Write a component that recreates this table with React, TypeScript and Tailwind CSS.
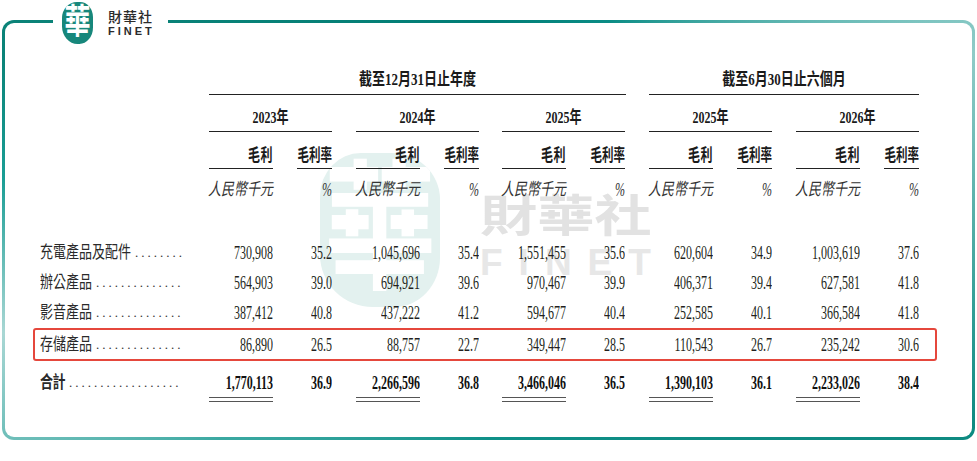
import React from 'react';

const groupGap = ['', 'ml-[24px]', 'ml-[23px]', 'ml-[24px]', 'ml-[24px]'];

const rows = [
  { label: '充電產品及配件', dots: 8, v: ['730,908', '35.2', '1,045,696', '35.4', '1,551,455', '35.6', '620,604', '34.9', '1,003,619', '37.6'] },
  { label: '辦公產品', dots: 14, v: ['564,903', '39.0', '694,921', '39.6', '970,467', '39.9', '406,371', '39.4', '627,581', '41.8'] },
  { label: '影音產品', dots: 14, v: ['387,412', '40.8', '437,222', '41.2', '594,677', '40.4', '252,585', '40.1', '366,584', '41.8'] },
];

const storage = { label: '存儲產品', dots: 14, v: ['86,890', '26.5', '88,757', '22.7', '349,447', '28.5', '110,543', '26.7', '235,242', '30.6'] };

const total = ['1,770,113', '36.9', '2,266,596', '36.8', '3,466,046', '36.5', '1,390,103', '36.1', '2,233,026', '38.4'];

const years = ['2023年', '2024年', '2025年', '2025年', '2026年'];

// the source table is set in a tall, narrow face: small size stretched upwards
const Num = ({ children, bold = false }: { children: React.ReactNode; bold?: boolean }) => (
  <span
    className={`inline-block scale-y-[1.6] whitespace-nowrap text-[12px] leading-[28px] ${
      bold ? 'font-bold text-[#111]' : 'text-[#231f20]'
    }`}
  >
    {children}
  </span>
);

const Label = ({ text, dots, bold = false }: { text: string; dots: number; bold?: boolean }) => (
  <div className="flex w-[169px] shrink-0 items-baseline">
    <span
      className={`inline-block scale-y-[1.3] whitespace-nowrap text-[13px] leading-[28px] text-[#2a2a2a] ${
        bold ? 'font-bold tracking-[-0.5px]' : ''
      }`}
    >
      {text}
    </span>
    <span className="ml-[4px] whitespace-nowrap text-[13px] tracking-[3px] text-[#333]">{'.'.repeat(dots)}</span>
  </div>
);

const DataCells = ({ v }: { v: string[] }) => (
  <>
    {[0, 1, 2, 3, 4].map((g) => (
      <div key={g} className={`flex w-[123px] shrink-0 ${groupGap[g]}`}>
        <div className="flex w-[64px] justify-end">
          <Num>{v[g * 2]}</Num>
        </div>
        <div className="ml-[24px] flex w-[35px] justify-end">
          <Num>{v[g * 2 + 1]}</Num>
        </div>
      </div>
    ))}
  </>
);

const Logo = () => (
  <div className="absolute left-[53px] top-0 flex h-[46px] w-[115px] items-center bg-white">
    <div className="ml-[9px] flex h-[42px] w-[31px] items-center justify-center overflow-hidden rounded-[48%_42%_44%_50%/38%_36%_40%_42%] bg-[#17877b]">
      <span className="inline-block scale-y-[1.35] text-[26px] font-bold leading-none text-white">華</span>
    </div>
    <div className="ml-[15px] mt-[1px] flex flex-col font-['Liberation_Sans','Noto_Sans_CJK_TC',sans-serif] leading-none text-[#2b2b2b]">
      <span className="text-[14px] font-medium tracking-[1px]">財華社</span>
      <span className="mt-[2px] text-[11px] font-bold tracking-[3px]">FINET</span>
    </div>
  </div>
);

const Watermark = () => (
  <>
    <div className="absolute left-[315px] top-[130px] flex h-[154px] w-[120px] items-center justify-center overflow-hidden rounded-[34%_40%_38%_44%/28%_30%_32%_34%] bg-[#e3f1ef]">
      <span className="inline-block scale-y-[1.25] text-[112px] font-bold leading-none text-white">華</span>
    </div>
    <div className="absolute left-[475px] top-[171px] flex flex-col items-start text-[#e2e2e2]">
      <span className="inline-block origin-left scale-x-[1.3] text-[44px] font-bold leading-[48px]">財華社</span>
      <span className="mt-[3px] font-['Liberation_Sans',sans-serif] text-[37px] font-bold leading-[36px] tracking-[16px] text-[#e7e7e7]">
        FINET
      </span>
    </div>
  </>
);

export default function App() {
  return (
    <div className="relative h-[461px] w-[977px] overflow-hidden bg-white font-['Liberation_Serif','Noto_Sans_CJK_TC',serif]">
      <div className="ml-[2px] mt-[20px] h-[420px] w-[973px] rounded-[12px] bg-[conic-gradient(#007d76_0deg,#0a8c85_30deg,#7cc4c0_64deg,#8fcbc7_70deg,#0e8a81_112deg,#0f9088_180deg,#3aa8a1_232deg,#70bfba_247deg,#a9d7d4_258deg,#1a9e95_276deg,#0b8378_290deg,#007d76_360deg)] p-[3px]">
        <div className="relative h-full rounded-[9px] bg-white pl-[35px] pt-[47px]">
          <Watermark />

          <div className="relative">
            {/* period headers */}
            <div className="flex">
              <div className="w-[169px] shrink-0" />
              <div className="flex h-[25px] w-[417px] justify-center border-b border-[#222]">
                <span className="inline-block scale-y-[1.3] whitespace-nowrap text-[13px] font-bold leading-[20px] text-[#1a1a1a]">
                  截至12月31日止年度
                </span>
              </div>
              <div className="ml-[23px] flex h-[25px] w-[270px] justify-center border-b border-[#222]">
                <span className="inline-block scale-y-[1.3] whitespace-nowrap text-[13px] font-bold leading-[20px] text-[#1a1a1a]">
                  截至6月30日止六個月
                </span>
              </div>
            </div>

            {/* years */}
            <div className="flex">
              <div className="w-[169px] shrink-0" />
              {years.map((y, g) => (
                <div key={g} className={`flex h-[37px] w-[123px] shrink-0 items-end justify-center border-b border-[#222] pb-[4px] ${groupGap[g]}`}>
                  <span className="inline-block scale-y-[1.4] whitespace-nowrap text-[12px] font-bold leading-[20px] text-[#1a1a1a]">
                    {y}
                  </span>
                </div>
              ))}
            </div>

            {/* column titles */}
            <div className="flex">
              <div className="w-[169px] shrink-0" />
              {years.map((_, g) => (
                <div key={g} className={`flex w-[123px] shrink-0 ${groupGap[g]}`}>
                  <div className="flex h-[37px] w-[64px] items-end justify-end border-b border-[#222] pb-[3px]">
                    <span className="inline-block scale-y-[1.4] whitespace-nowrap text-[12px] font-bold leading-[20px] tracking-[0.5px] text-[#1a1a1a]">
                      毛利
                    </span>
                  </div>
                  <div className="ml-[24px] flex h-[37px] w-[35px] items-end justify-end border-b border-[#222] pb-[3px]">
                    <span className="inline-block scale-y-[1.45] whitespace-nowrap text-[11.5px] font-bold leading-[20px] text-[#1a1a1a]">
                      毛利率
                    </span>
                  </div>
                </div>
              ))}
            </div>

            {/* units */}
            <div className="flex h-[31px] pt-[11px]">
              <div className="w-[169px] shrink-0" />
              {years.map((_, g) => (
                <div key={g} className={`flex w-[123px] shrink-0 ${groupGap[g]}`}>
                  <div className="flex w-[64px] justify-end">
                    <span className="inline-block scale-y-[1.3] whitespace-nowrap text-[13px] italic leading-[20px] text-[#333]">
                      人民幣千元
                    </span>
                  </div>
                  <div className="ml-[24px] flex w-[35px] justify-end">
                    <span className="inline-block scale-y-[1.5] whitespace-nowrap text-[12px] italic leading-[20px] text-[#333]">
                      %
                    </span>
                  </div>
                </div>
              ))}
            </div>

            {/* data rows */}
            <div className="mt-[38px] flex flex-col">
              {rows.map((r) => (
                <div key={r.label} className="flex h-[30px] items-center">
                  <Label text={r.label} dots={r.dots} />
                  <DataCells v={r.v} />
                </div>
              ))}

              <div className="-ml-[7px] flex h-[33px] w-fit items-center rounded-[3px] border-2 border-[#e5473c] pl-[5px] pr-[16px] pt-[1px]">
                <Label text={storage.label} dots={storage.dots} />
                <DataCells v={storage.v} />
              </div>

              <div className="mt-[8px] flex items-start">
                <Label text="合計" dots={18} bold />
                {[0, 1, 2, 3, 4].map((g) => (
                  <div key={g} className={`flex w-[123px] shrink-0 ${groupGap[g]}`}>
                    <div className="flex w-[64px] flex-col">
                      <div className="flex h-[28px] justify-end">
                        <Num bold>{total[g * 2]}</Num>
                      </div>
                      <div className="h-px bg-[#555]" />
                      <div className="mt-[3px] h-px bg-[#555]" />
                    </div>
                    <div className="ml-[24px] flex h-[28px] w-[35px] justify-end">
                      <Num bold>{total[g * 2 + 1]}</Num>
                    </div>
                  </div>
                ))}
              </div>
            </div>
          </div>
        </div>
      </div>

      <Logo />
    </div>
  );
}
